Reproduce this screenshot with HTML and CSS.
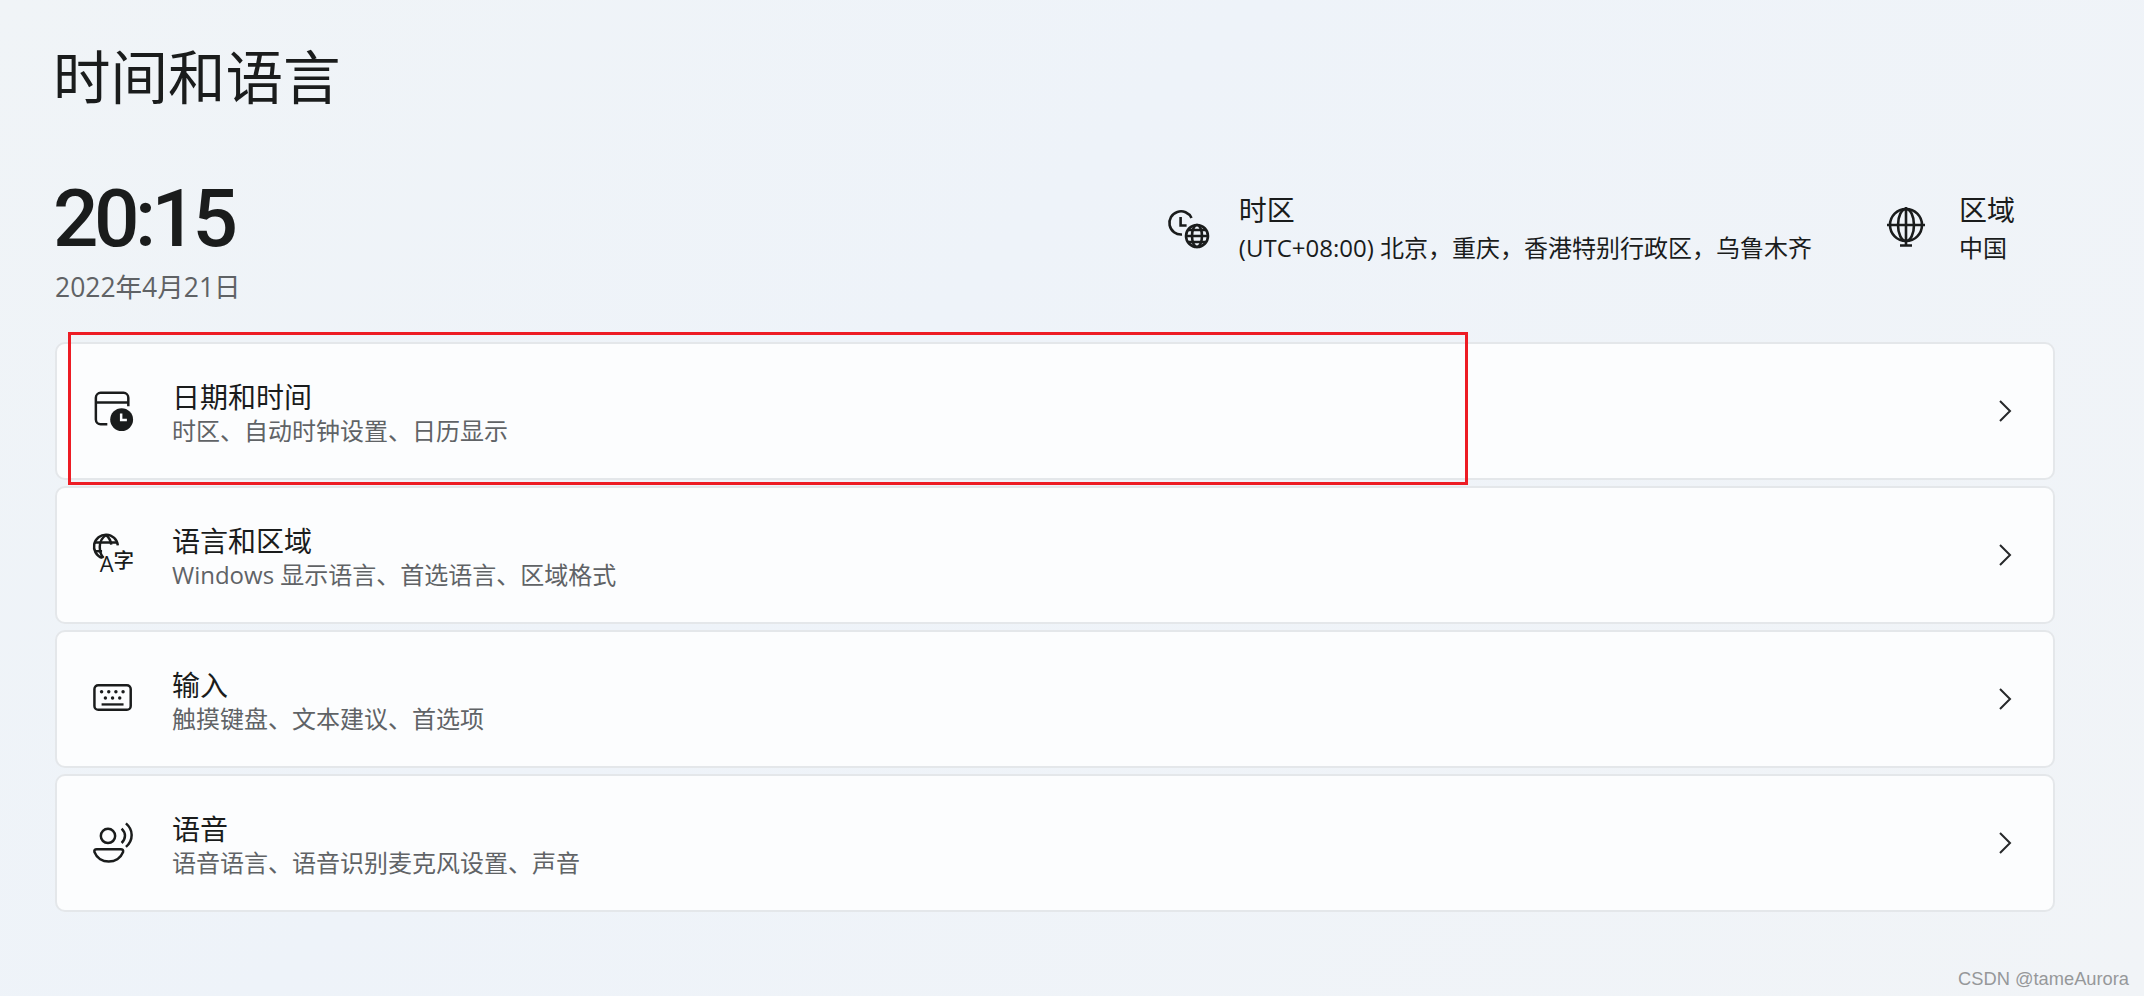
FILE: index.html
```html
<!DOCTYPE html>
<html lang="zh-CN">
<head>
<meta charset="utf-8">
<title>时间和语言</title>
<link rel="stylesheet" href="styles.css">
</head>
<body>
<main class="page">
  <h1 class="title">时间和语言</h1>
  <section class="summary">
    <div class="clock">
      <div class="time">20:15</div>
      <div class="date">2022年4月21日</div>
    </div>
    <div class="facts">
      <div class="fact fact-zone">
        <svg class="fact-icon" viewBox="0 0 44 44" fill="none" stroke="#1a1c1c" stroke-width="2.6">
          <path d="M15 26.500A11.600 11.600 0 1 1 24.500 10"/>
          <path d="M13.600 9v8.500h6"/>
          <circle cx="30" cy="28" r="11"/>
          <path d="M19 28h22M21 22h18M21 34h18"/>
          <ellipse cx="30" cy="28" rx="5" ry="11"/>
        </svg>
        <div class="fact-text">
          <div class="fact-name">时区</div>
          <div class="fact-value">(UTC+08:00) 北京，重庆，香港特别行政区，乌鲁木齐</div>
        </div>
      </div>
      <div class="fact fact-region">
        <svg class="fact-icon" viewBox="0 0 44 44" fill="none" stroke="#1a1c1c" stroke-width="2.600">
          <circle cx="21" cy="19" r="16"/>
          <ellipse cx="21" cy="19" rx="8" ry="16"/>
          <path d="M2 19h38M21 1v38M15 39.500h12"/>
        </svg>
        <div class="fact-text">
          <div class="fact-name">区域</div>
          <div class="fact-value">中国</div>
        </div>
      </div>
    </div>
  </section>

  <section class="list">
    <a class="row">
      <svg class="row-icon" viewBox="0 0 44 44" fill="none" stroke="#1a1c1c" stroke-width="2.600">
        <path d="M15 36H8a5 5 0 0 1-5-5V8a5 5 0 0 1 5-5h24a5 5 0 0 1 5 5v9"/>
        <path d="M3 13h34"/>
        <circle cx="30" cy="31" r="12" fill="#1a1c1c" stroke="none"/>
        <path d="M29.500 24.500v7h6" stroke="#fcfdfe"/>
      </svg>
      <div class="row-text">
        <div class="row-name">日期和时间</div>
        <div class="row-desc">时区、自动时钟设置、日历显示</div>
      </div>
      <svg class="chev" viewBox="0 0 14 24" fill="none" stroke="#26282a" stroke-width="2"><path d="M2 2l10 10L2 22"/></svg>
    </a>
    <a class="row">
      <svg class="row-icon" viewBox="0 0 44 44" fill="none" stroke="#1a1c1c" stroke-width="2.600">
        <path d="M9.500 25A12.500 12.500 0 1 1 26 12"/>
        <path d="M1.500 9h24M1.500 18h8"/>
        <path d="M13.600 1.100c-4.500 3-6.500 7.500-6.500 12.500s2 9.500 4 11.500"/>
        <path d="M13.600 1.100c3 2.500 5 6 5.500 10"/>
        <text class="icon-latin" x="7" y="40">A</text>
        <text class="icon-cjk" x="21.500" y="35.500">字</text>
      </svg>
      <div class="row-text">
        <div class="row-name">语言和区域</div>
        <div class="row-desc">Windows 显示语言、首选语言、区域格式</div>
      </div>
      <svg class="chev" viewBox="0 0 14 24" fill="none" stroke="#26282a" stroke-width="2"><path d="M2 2l10 10L2 22"/></svg>
    </a>
    <a class="row">
      <svg class="row-icon" viewBox="0 0 44 44" fill="#1a1c1c">
        <rect x="1.500" y="7.600" width="38" height="25.700" rx="4" fill="none" stroke="#1a1c1c" stroke-width="2.600"/>
        <circle cx="9" cy="14.500" r="1.800"/><circle cx="16.500" cy="14.500" r="1.800"/><circle cx="24" cy="14.500" r="1.800"/><circle cx="31.500" cy="14.500" r="1.800"/>
        <circle cx="13" cy="21" r="1.800"/><circle cx="20.500" cy="21" r="1.800"/><circle cx="28" cy="21" r="1.800"/>
        <rect x="9" y="26.500" width="23" height="2.400"/>
      </svg>
      <div class="row-text">
        <div class="row-name">输入</div>
        <div class="row-desc">触摸键盘、文本建议、首选项</div>
      </div>
      <svg class="chev" viewBox="0 0 14 24" fill="none" stroke="#26282a" stroke-width="2"><path d="M2 2l10 10L2 22"/></svg>
    </a>
    <a class="row">
      <svg class="row-icon" viewBox="0 0 44 44" fill="none" stroke="#1a1c1c" stroke-width="2.600">
        <circle cx="15.700" cy="14.600" r="7.500"/>
        <path d="M4 28.500h25c2 0 3 1 2.500 3C29 38 23 41.500 16.500 41.500S4 38 1.500 31.500C1 29.500 2 28.500 4 28.500z"/>
        <path d="M30 7c2.500 2.500 3.500 5 3.500 7.500s-1 5-3.500 7.500"/>
        <path d="M34.500 1.500c4 3.500 6 7.500 6 12s-2 9-6 12.500"/>
      </svg>
      <div class="row-text">
        <div class="row-name">语音</div>
        <div class="row-desc">语音语言、语音识别麦克风设置、声音</div>
      </div>
      <svg class="chev" viewBox="0 0 14 24" fill="none" stroke="#26282a" stroke-width="2"><path d="M2 2l10 10L2 22"/></svg>
    </a>
  </section>
</main>
<div class="highlight"></div>
<div class="watermark">CSDN @tameAurora</div>
</body>
</html>
```

FILE: styles.css
```css
html, body {
  margin: 0;
  height: 100%;
}
body {
  position: relative;
  overflow: hidden;
  background: linear-gradient(135deg, #f0f4f7 0%, #eef3f9 40%, #f1f4f7 100%);
  color: #1a1c1c;
  font-family: "Open Sans", "Noto Sans CJK SC", sans-serif;
}
.page {
  padding: 38px 89px 0 55px;
}
.title {
  margin: 0 0 0 -2px;
  font-size: 57.500px;
  line-height: 78px;
  font-weight: 400;
}
.summary {
  display: flex;
  justify-content: space-between;
  margin-top: 48px;
  height: 178px;
}
.clock {
  margin-left: -2px;
}
.time {
  margin-top: 13px;
  font-family: Roboto, "Open Sans", sans-serif;
  font-size: 80px;
  line-height: 84px;
  font-weight: 500;
  letter-spacing: -4.500px;
}
.date {
  margin-top: 8px;
  margin-left: 2px;
  font-size: 26.500px;
  line-height: 36px;
  color: #5f6265;
}
.facts {
  display: flex;
  padding-top: 26px;
}
.fact {
  display: flex;
  align-items: flex-start;
}
.fact-zone {
  margin-right: 73px;
}
.fact-region {
  margin-right: 40px;
}
.fact-icon {
  width: 44px;
  height: 44px;
  margin-top: 18px;
  margin-right: 28px;
}
.fact-region .fact-icon {
  margin-right: 30px;
  margin-top: 16px;
}
.fact-name {
  font-size: 28px;
  line-height: 40px;
}
.fact-value {
  font-size: 24px;
  line-height: 36px;
}
.list {
  display: flex;
  flex-direction: column;
  gap: 6px;
}
.row {
  display: flex;
  align-items: center;
  box-sizing: border-box;
  height: 138px;
  padding: 0 41px 0 36px;
  background: #fcfdfe;
  border: 2px solid #e4e7ea;
  border-radius: 10px;
}
.row-icon {
  width: 42px;
  height: 42px;
  margin-right: 37px;
  flex: none;
  overflow: visible;
}
.row-text {
  flex: 1;
  padding-top: 4px;
}
.row-name {
  font-size: 28px;
  line-height: 36px;
  color: #1a1c1c;
}
.row-desc {
  font-size: 24px;
  line-height: 32px;
  color: #606366;
}
.chev {
  width: 14px;
  height: 24px;
  flex: none;
}
.icon-latin {
  font-family: "Open Sans", sans-serif;
  font-size: 23px;
  fill: #1a1c1c;
  stroke: none;
}
.icon-cjk {
  font-family: "Noto Sans CJK SC", sans-serif;
  font-size: 21.500px;
  font-weight: 500;
  fill: #1a1c1c;
  stroke: none;
}
.highlight {
  position: absolute;
  left: 68px;
  top: 332px;
  width: 1394px;
  height: 147px;
  border: 3px solid #ed1c24;
}
.watermark {
  position: absolute;
  right: 15px;
  top: 967px;
  font-family: "Liberation Sans", sans-serif;
  font-size: 18.300px;
  line-height: 24px;
  color: #96989a;
}
```
